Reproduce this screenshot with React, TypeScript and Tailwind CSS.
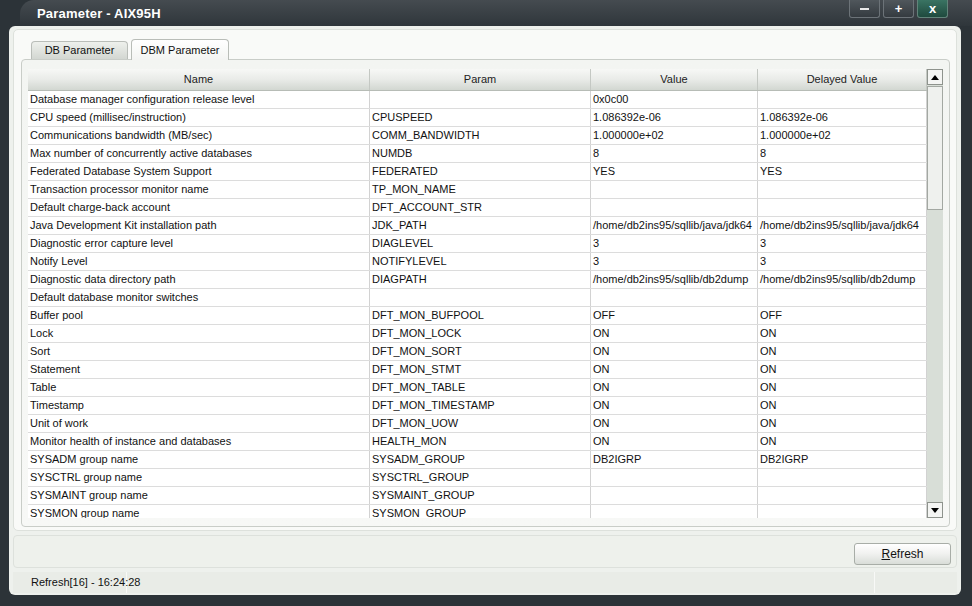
import React from "react";

const rows: [string, string, string, string][] = [
  ["Database manager configuration release level", "", "0x0c00", ""],
  ["CPU speed (millisec/instruction)", "CPUSPEED", "1.086392e-06", "1.086392e-06"],
  ["Communications bandwidth (MB/sec)", "COMM_BANDWIDTH", "1.000000e+02", "1.000000e+02"],
  ["Max number of concurrently active databases", "NUMDB", "8", "8"],
  ["Federated Database System Support", "FEDERATED", "YES", "YES"],
  ["Transaction processor monitor name", "TP_MON_NAME", "", ""],
  ["Default charge-back account", "DFT_ACCOUNT_STR", "", ""],
  ["Java Development Kit installation path", "JDK_PATH", "/home/db2ins95/sqllib/java/jdk64", "/home/db2ins95/sqllib/java/jdk64"],
  ["Diagnostic error capture level", "DIAGLEVEL", "3", "3"],
  ["Notify Level", "NOTIFYLEVEL", "3", "3"],
  ["Diagnostic data directory path", "DIAGPATH", "/home/db2ins95/sqllib/db2dump", "/home/db2ins95/sqllib/db2dump"],
  ["Default database monitor switches", "", "", ""],
  ["Buffer pool", "DFT_MON_BUFPOOL", "OFF", "OFF"],
  ["Lock", "DFT_MON_LOCK", "ON", "ON"],
  ["Sort", "DFT_MON_SORT", "ON", "ON"],
  ["Statement", "DFT_MON_STMT", "ON", "ON"],
  ["Table", "DFT_MON_TABLE", "ON", "ON"],
  ["Timestamp", "DFT_MON_TIMESTAMP", "ON", "ON"],
  ["Unit of work", "DFT_MON_UOW", "ON", "ON"],
  ["Monitor health of instance and databases", "HEALTH_MON", "ON", "ON"],
  ["SYSADM group name", "SYSADM_GROUP", "DB2IGRP", "DB2IGRP"],
  ["SYSCTRL group name", "SYSCTRL_GROUP", "", ""],
  ["SYSMAINT group name", "SYSMAINT_GROUP", "", ""],
  ["SYSMON group name", "SYSMON_GROUP", "", ""],
];

const widths = ["w-[342px]", "w-[221px]", "w-[167px]", "w-[169px]"];

function WinBtn({ children, close }: { children: React.ReactNode; close?: boolean }) {
  return (
    <div
      className={
        "w-[31px] h-[18px] flex items-center justify-center rounded-b-[3px] border border-t-0 text-white font-bold text-[13px] leading-none " +
        (close
          ? "bg-gradient-to-b from-[#3a7463] to-[#1f4a3e] border-[#62847a]"
          : "bg-gradient-to-b from-[#50575c] to-[#353b40] border-[#6c7378]")
      }
    >
      {children}
    </div>
  );
}

export default function App() {
  return (
    <div
      className="w-[972px] h-[606px] bg-[#2c3338] flex flex-col overflow-hidden text-[#111] text-[11px]"
      style={{ fontFamily: '"Liberation Sans", Arial, sans-serif' }}
    >
      {/* Title bar */}
      <div className="h-[26px] shrink-0 flex items-start relative">
        <div className="absolute left-[20px] top-0 right-0 h-[26px] rounded-tl-[14px] bg-gradient-to-b from-[#454b50] to-[#2f363b]" />
        <div className="relative pl-[37px] pt-[4px] text-white font-bold text-[13px] tracking-[0.2px]">Parameter - AIX95H</div>
        <div className="relative ml-auto mr-[24px] flex gap-[3px]">
          <WinBtn>
            <span className="block w-[9px] h-[2px] bg-[#e8e8e8]" />
          </WinBtn>
          <WinBtn>+</WinBtn>
          <WinBtn close>x</WinBtn>
        </div>
      </div>

      {/* Client */}
      <div className="ml-[9px] mr-[11px] mb-[11px] flex-1 bg-[#eef1ed] rounded-[6px] flex flex-col px-[4px] pt-[3px] pb-[2px] min-h-0">
        {/* main panel */}
        <div className="flex-1 min-h-0 bg-[#f9faf8] border border-[#dde1dc] rounded-[5px] flex flex-col pl-[7px] pr-[6px] pt-[8px] pb-[3px]">
          {/* tabs */}
          <div className="flex items-end h-[21px] shrink-0 pl-[10px] gap-[3px]">
            <div className="h-[18px] w-[97px] flex items-center justify-center rounded-t-[4px] border border-b-0 border-[#b9bdb8] bg-gradient-to-b from-[#eef0ec] to-[#d3d7d2]">
              DB Parameter
            </div>
            <div className="h-[21px] w-[98px] flex items-center justify-center rounded-t-[4px] border border-b-0 border-[#b9bdb8] bg-gradient-to-b from-[#ffffff] to-[#f3f4f2] relative top-[1px] z-10">
              DBM Parameter
            </div>
          </div>
          {/* tab panel */}
          <div className="flex-1 min-h-0 border border-[#c9cdc8] rounded-[4px] bg-gradient-to-b from-[#f3f5f2] to-[#f7f8f6] pl-[6px] pr-[6px] pt-[9px] pb-[8px] flex">
            <div className="w-[899px] h-full overflow-hidden bg-white flex flex-col">
              {/* header */}
              <div className="flex h-[22px] shrink-0 bg-gradient-to-b from-[#f7f8f6] via-[#e9ebe8] to-[#d2d7d1] border-b border-[#b7bcb6]">
                {["Name", "Param", "Value", "Delayed Value"].map((h, i) => (
                  <div key={h} className={"flex items-center justify-center border-r border-[#c4c8c3] text-[#222] " + widths[i]}>
                    {h}
                  </div>
                ))}
              </div>
              {rows.map((r, ri) => (
                <div key={ri} className="flex h-[18px] shrink-0 border-b border-[#dcdcdc]">
                  {r.map((c, ci) => (
                    <div
                      key={ci}
                      className={"flex items-center pl-[2px] border-r border-[#d2d2d2] whitespace-nowrap overflow-hidden " + widths[ci]}
                    >
                      {c}
                    </div>
                  ))}
                </div>
              ))}
            </div>
            {/* scrollbar */}
            <div className="w-[16px] h-full bg-[#d8ded7] flex flex-col">
              <div className="w-[16px] h-[16px] shrink-0 bg-[#f4f5f3] border border-[#8e938d] flex items-center justify-center">
                <svg width="8" height="5" viewBox="0 0 8 5"><path d="M0 5 L4 0 L8 5 Z" fill="#000" /></svg>
              </div>
              <div className="mt-[1px] w-[16px] h-[124px] shrink-0 bg-[#eff1ee] border border-[#a3a8a2]" />
              <div className="flex-1" />
              <div className="w-[16px] h-[16px] shrink-0 bg-[#f4f5f3] border border-[#8e938d] flex items-center justify-center">
                <svg width="8" height="5" viewBox="0 0 8 5"><path d="M0 0 L8 0 L4 5 Z" fill="#000" /></svg>
              </div>
            </div>
          </div>
        </div>

        {/* bottom button panel */}
        <div className="mt-[4px] h-[33px] shrink-0 bg-[#eef1ec] border border-[#dde1dc] rounded-[4px] flex items-start justify-end pr-[5px] pt-[7px]">
          <div className="w-[97px] h-[22px] rounded-[3px] border border-[#a8ada7] bg-gradient-to-b from-[#ffffff] via-[#f0f1ef] to-[#d9ddd8] flex items-center justify-center text-[12px]">
            <span>
              <span className="underline">R</span>efresh
            </span>
          </div>
        </div>

        {/* status bar */}
        <div className="mt-[4px] h-[21px] shrink-0 flex bg-[#e9ece7]">
          <div className="w-[114px] flex items-center pl-[18px] border-r border-[#f8f9f7] whitespace-nowrap">Refresh[16] - 16:24:28</div>
          <div className="flex-1 border-r border-[#f8f9f7]" />
          <div className="w-[82px]" />
        </div>
      </div>
    </div>
  );
}
